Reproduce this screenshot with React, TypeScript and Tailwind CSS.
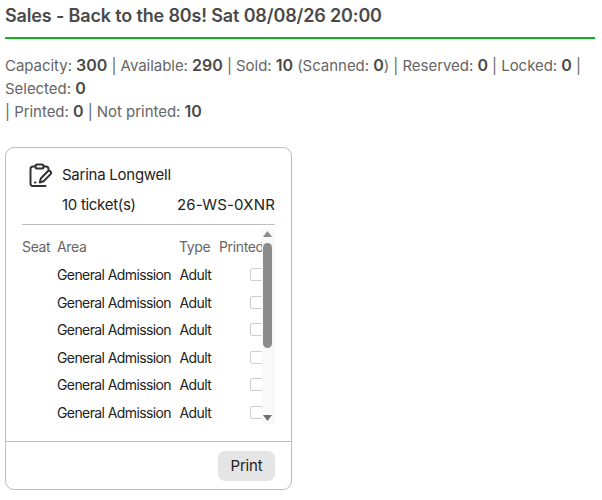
const F = "font-['Inter','Liberation_Sans',sans-serif]";

function ClipboardIcon() {
  return (
    <svg width="24" height="24" viewBox="0 0 24 24" fill="none" stroke="#333" strokeWidth="2" strokeLinecap="round" strokeLinejoin="round">
      <rect x="7.5" y="1.5" width="8" height="4" rx="1.5" />
      <path d="M7.5 3.5H5a2.5 2.5 0 0 0-2.5 2.5v14.5A2.5 2.5 0 0 0 5 23h12.5" />
      <path d="M15.5 3.5H18a2.5 2.5 0 0 1 2.5 2.5v1.5" />
      <path d="M13 19.5l1-4 7-7.2a2 2 0 0 1 2.8 2.8l-7 7.2z" transform="translate(-1.2 0)" />
      <path d="M7 19.5h.5" />
    </svg>
  );
}

function Row() {
  return (
    <div className="flex h-[27.5px] items-center text-[14px] tracking-[-0.6px] text-[#222]">
      <div className="w-[35px] shrink-0" />
      <div className="w-[122.5px] shrink-0 whitespace-nowrap">General Admission</div>
      <div className="w-[70px] shrink-0">Adult</div>
      <div className="h-[13px] w-[13px] shrink-0 rounded-[2px] border border-[#cfcfcf] bg-white" />
    </div>
  );
}

function N({ children }: { children: string }) {
  return <b className="text-[16px] font-semibold text-[#4a4a4a]">{children}</b>;
}

export default function App() {
  return (
    <div className={`${F} h-[500px] w-[602px] overflow-hidden bg-white px-[5px] pt-[5px] text-[#555]`}>
      <h1 className="w-[590px] border-b-2 border-[#0fb31f] pb-[11px] text-[18px] leading-[21px] font-semibold tracking-[-0.15px] whitespace-nowrap text-[#4a4a4a]">
        Sales - Back to the 80s! Sat 08/08/26 20:00
      </h1>
      <div className="mt-[15px] w-[590px] text-[15px] leading-[23px] tracking-[-0.04px] text-[#666]">
        <div className="whitespace-nowrap">
          Capacity: <N>300</N> | Available: <N>290</N> | Sold: <N>10</N> (Scanned: <N>0</N>) | Reserved: <N>0</N> | Locked: <N>0</N> |
        </div>
        <div>
          Selected: <N>0</N>
        </div>
        <div>
          | Printed: <N>0</N> | Not printed: <N>10</N>
        </div>
      </div>

      <div className="mt-[24px] flex h-[343px] w-[287px] flex-col rounded-[9px] border border-[#bdbdbd]">
        <div className="mx-4 border-b border-[#bdbdbd] pt-[15px] pb-[8px]">
          <div className="flex items-center gap-[10px] pl-[6px]">
            <ClipboardIcon />
            <span className="text-[15px] leading-[22px] tracking-[-0.25px] text-[#222]">Sarina Longwell</span>
          </div>
          <div className="mt-[7px] flex items-center justify-between pl-[40px] text-[15px] leading-[22px] text-[#222]">
            <span className="tracking-[-0.3px]">10 ticket(s)</span>
            <span className="tracking-[0.2px]">26-WS-0XNR</span>
          </div>
        </div>
        <div className="relative mx-4 h-[216px] overflow-hidden pt-[9px]">
          <div className="flex h-[24px] items-center text-[14px] tracking-[-0.35px] text-[#666]">
            <div className="w-[35px] shrink-0">Seat</div>
            <div className="w-[122px] shrink-0">Area</div>
            <div className="w-[40px] shrink-0">Type</div>
            <div className="w-[43px] shrink-0 overflow-hidden whitespace-nowrap">Printed</div>
          </div>
          <div className="mt-[3px]">
            <Row /><Row /><Row /><Row /><Row /><Row />
          </div>
          <div className="absolute top-[3px] right-0 bottom-[17px] flex w-[13px] flex-col items-start bg-[#f9f9f9]">
            <svg width="11" height="8" viewBox="0 0 11 8" className="mt-[2px] shrink-0"><path d="M5.5 1L10 7H1z" fill="#8a8a8a" /></svg>
            <div className="mt-[5px] ml-[1px] h-[105px] w-[9px] shrink-0 rounded-full bg-[#8c8c8c]" />
            <div className="flex-1" />
            <svg width="11" height="8" viewBox="0 0 11 8" className="mb-[2px] shrink-0"><path d="M1 1H10L5.5 7z" fill="#6f6f6f" /></svg>
          </div>
        </div>
        <div className="flex flex-1 items-start justify-end border-t border-[#bdbdbd] px-4 pt-[9px]">
          <button className="h-[30px] w-[57px] rounded-[7px] bg-[#e5e5e5] text-[15px] tracking-[-0.2px] text-[#222]">Print</button>
        </div>
      </div>
    </div>
  );
}
